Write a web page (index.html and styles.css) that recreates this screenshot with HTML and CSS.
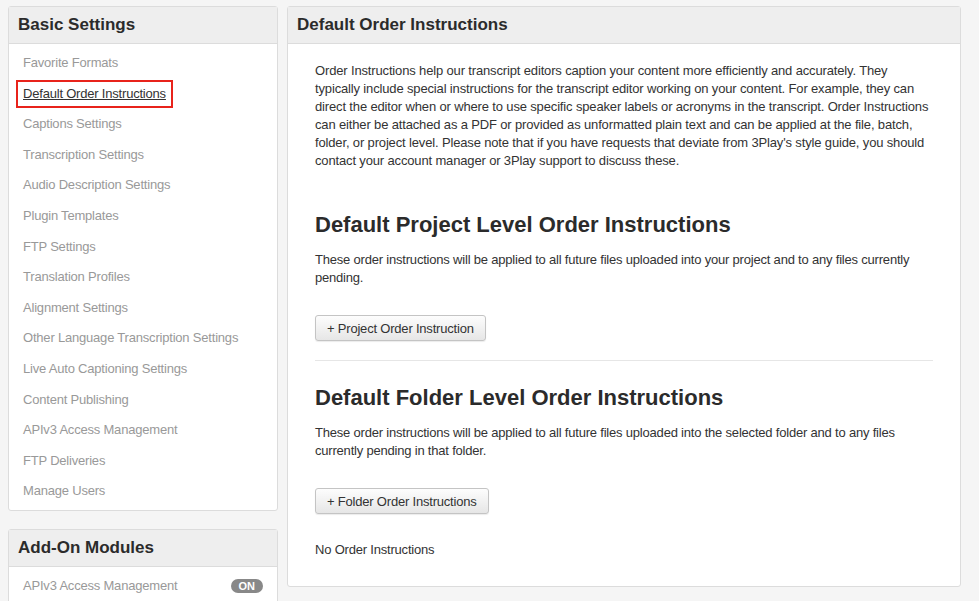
FILE: index.html
```html
<!DOCTYPE html>
<html lang="en">
<head>
	<meta charset="UTF-8">
	<title>Settings</title>
	<link rel="stylesheet" href="styles.css">
</head>
<body>
	<div class="page">
		<div class="sidebar">
			<div class="panel">
				<div class="panel-head">Basic Settings</div>
				<ul class="menu">
					<li>Favorite Formats</li>
					<li class="current"><span>Default Order Instructions</span></li>
					<li>Captions Settings</li>
					<li>Transcription Settings</li>
					<li>Audio Description Settings</li>
					<li>Plugin Templates</li>
					<li>FTP Settings</li>
					<li>Translation Profiles</li>
					<li>Alignment Settings</li>
					<li>Other Language Transcription Settings</li>
					<li>Live Auto Captioning Settings</li>
					<li>Content Publishing</li>
					<li>APIv3 Access Management</li>
					<li>FTP Deliveries</li>
					<li>Manage Users</li>
				</ul>
			</div>
			<div class="panel">
				<div class="panel-head">Add-On Modules</div>
				<ul class="menu">
					<li class="module">APIv3 Access Management <b class="badge">ON</b></li>
				</ul>
			</div>
		</div>
		<div class="main panel">
			<div class="panel-head">Default Order Instructions</div>
			<div class="main-body">
				<p class="intro">Order Instructions help our transcript editors caption your content more efficiently and accurately. They typically include special instructions for the transcript editor working on your content. For example, they can direct the editor when or where to use specific speaker labels or acronyms in the transcript. Order Instructions can either be attached as a PDF or provided as unformatted plain text and can be applied at the file, batch, folder, or project level. Please note that if you have requests that deviate from 3Play's style guide, you should contact your account manager or 3Play support to discuss these.</p>

				<h2>Default Project Level Order Instructions</h2>
				<p>These order instructions will be applied to all future files uploaded into your project and to any files currently pending.</p>
				<button class="btn">+ Project Order Instruction</button>
				<hr>

				<h2 class="second">Default Folder Level Order Instructions</h2>
				<p>These order instructions will be applied to all future files uploaded into the selected folder and to any files currently pending in that folder.</p>
				<button class="btn">+ Folder Order Instructions</button>
				<p class="empty">No Order Instructions</p>
			</div>
		</div>
	</div>
</body>
</html>
```

FILE: styles.css
```css
*{
	padding: 0;
	margin: 0;
	box-sizing: border-box;
}
body{
	background: #f5f5f5;
	font-family: "Liberation Sans", Arial, sans-serif;
	color: #333;
	font-size: 13px;
}
.page{
	display: flex;
	align-items: flex-start;
	gap: 9px;
	padding: 6px 0 0 8px;
}
.sidebar{
	width: 270px;
	display: flex;
	flex-direction: column;
	gap: 18px;
}
.panel{
	background: #fff;
	border: 1px solid #dcdcdc;
	border-radius: 3px;
}
.panel-head{
	background: #eee;
	border-bottom: 1px solid #dcdcdc;
	height: 37px;
	line-height: 36px;
	padding: 0 9px;
	font-size: 17px;
	font-weight: bold;
	color: #2b2b2b;
}
.menu{
	list-style: none;
	padding: 4px 0 3px;
	letter-spacing: -0.2px;
}
.menu li{
	padding: 6px 14px;
	line-height: 18.6px;
	color: #999;
	white-space: nowrap;
}
.menu li.current span{
	color: #333;
	text-decoration: underline;
	border: 2px solid #e8231b;
	padding: 4px 5px 5px;
	margin-left: -7px;
}
.menu li.module{
	display: flex;
	justify-content: space-between;
	align-items: center;
	padding-right: 14px;
}
.badge{
	background: #888;
	color: #fff;
	font-size: 11px;
	line-height: 14px;
	letter-spacing: 0;
	padding: 0 8px;
	border-radius: 8px;
}
.main{
	width: 674px;
}
.main-body{
	padding: 18px 27px 27px 27px;
	line-height: 18px;
}
.main-body p,
.btn{
	letter-spacing: -0.2px;
}
.main-body p.intro{
	letter-spacing: -0.15px;
}
.main-body h2{
	font-size: 22px;
	line-height: 26px;
	color: #2b2b2b;
	margin: 42px 0 13px;
}
.main-body h2.second{
	margin-top: 24px;
}
.btn{
	margin-top: 28px;
	height: 26px;
	padding: 0 11px;
	font-family: inherit;
	font-size: 13px;
	color: #333;
	border: 1px solid #c4c4c4;
	border-radius: 3px;
	background: linear-gradient(#fdfdfd, #e6e6e6);
	box-shadow: 0 1px 1px rgba(0,0,0,0.08);
}
hr{
	border: 0;
	border-top: 1px solid #e6e6e6;
	margin: 19px 0 0;
}
.empty{
	margin-top: 27px;
}
```
